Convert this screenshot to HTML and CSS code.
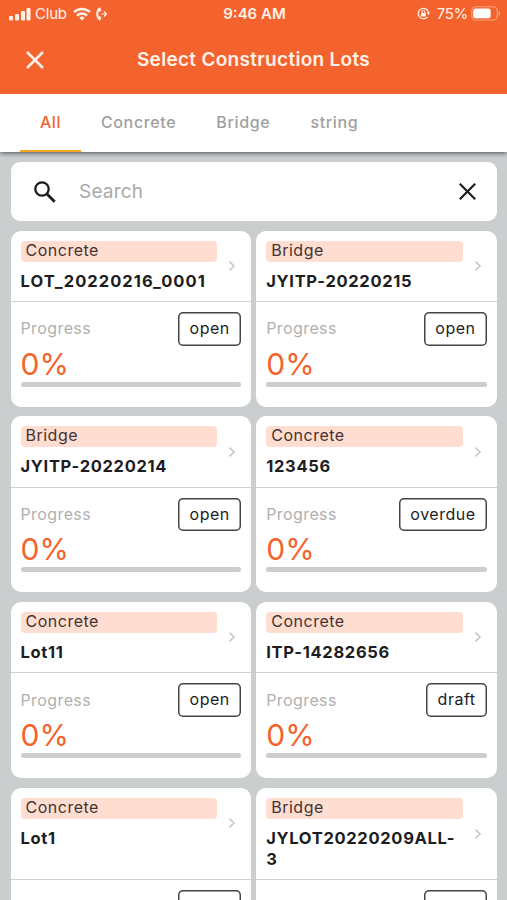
FILE: index.html
```
<!DOCTYPE html>
<html lang="en">
<head>
<meta charset="utf-8">
<title>Select Construction Lots</title>
<link rel="stylesheet" href="styles.css">
</head>
<body>
<header class="top">
  <div class="status">
    <div class="status-left">
      <svg class="signal" width="22" height="14" viewBox="0 0 22 14" fill="currentColor"><rect x="0" y="9" width="4" height="4.500" rx="1"/><rect x="6" y="7" width="4" height="6.500" rx="1"/><rect x="12" y="4" width="4" height="9.500" rx="1"/><rect x="17.500" y="1" width="4" height="12.500" rx="1"/></svg>
      <span class="carrier">Club</span>
      <svg class="wifi" width="18" height="14" viewBox="0 0 18 14" fill="none" stroke="currentColor" stroke-width="2.500"><path d="M1 5.200a11.300 11.300 0 0 1 16 0"/><path d="M4 8.600a7 7 0 0 1 10 0"/><path d="M6.300 10.800a3.800 3.800 0 0 1 5.400 0L9 13.600z" fill="currentColor" stroke="none"/></svg>
      <svg class="call" width="12" height="14" viewBox="0 0 12 14" fill="none" stroke="currentColor"><path d="M4.300 1.200C.2 3.300.2 10.700 4.300 12.800" stroke-width="2"/><path d="M3.200 2.300l1.300 1.900M3.200 11.700l1.300-1.900" stroke-width="2.600"/><path d="M5.300 7h5M8 4.500L10.500 7 8 9.500" stroke-width="1.200"/></svg>
    </div>
    <span class="clock">9:46 AM</span>
    <div class="status-right">
      <svg class="lock" width="13" height="13" viewBox="0 0 13 13" fill="none" stroke="currentColor" stroke-width="1.200"><path d="M10.500 9.800A5.200 5.200 0 1 1 11.600 6"/><path d="M9.600 5.500h3.600l-1.800 2.600z" fill="currentColor" stroke="none"/><rect x="4" y="5.800" width="4.800" height="3.600" rx=".6" fill="currentColor" stroke="none"/><path d="M5 6V4.800a1.400 1.400 0 0 1 2.800 0V6" stroke-width="1"/></svg>
      <span class="percent">75%</span>
      <svg class="battery" width="30" height="15" viewBox="0 0 30 15"><rect x=".8" y=".8" width="25.400" height="13.200" rx="4" fill="none" stroke="currentColor" stroke-opacity=".45" stroke-width="1.100"/><rect x="2.200" y="2.600" width="17.500" height="9.600" rx="2.300" fill="#fff"/><path d="M27.600 5.300c2 .7 2 3.700 0 4.400z" fill="currentColor" fill-opacity=".5"/></svg>
    </div>
  </div>
  <div class="titlebar">
    <svg class="close" width="18" height="18" viewBox="0 0 18 18" fill="none" stroke="currentColor" stroke-width="2.500"><path d="M1 1l16 16M17 1L1 17"/></svg>
    <h1>Select Construction Lots</h1>
  </div>
</header>
<nav class="tabs">
  <span class="tab active">All</span>
  <span class="tab">Concrete</span>
  <span class="tab">Bridge</span>
  <span class="tab">string</span>
</nav>
<main>
  <div class="search">
    <svg width="22" height="22" viewBox="0 0 22 22" fill="none" stroke="currentColor" stroke-width="2.300"><circle cx="8" cy="8" r="6.700"/><path d="M12.700 12.700l8 8" stroke-width="2.800"/></svg>
    <span class="placeholder">Search</span>
    <svg width="17" height="17" viewBox="0 0 17 17" fill="none" stroke="currentColor" stroke-width="2.200"><path d="M.8.8l15.400 15.400M16.200.8L.8 16.200"/></svg>
  </div>
  <div class="grid" id="grid"></div>
</main>
<script src="lots.js"></script>
</body>
</html>
```
FILE: styles.css
```
* { box-sizing: border-box; }
body {
  margin: 0;
  height: 900px;
  overflow: hidden;
  background: #cbcecf;
  color: #1d1d1f;
  font-family: Inter, "Liberation Sans", sans-serif;
  font-size: 16px;
}
svg { display: block; flex: none; }
.top {
  position: relative;
  z-index: 1;
  height: 94px;
  background: #f4632d;
  color: #fff1e8;
}
.status {
  display: grid;
  grid-template-columns: 1fr auto 1fr;
  align-items: center;
  height: 27px;
  padding: 0 7px 0 9px;
}
.status-left, .status-right { display: flex; align-items: center; }
.status-right { justify-content: flex-end; margin-right: -1px; }
.carrier { margin-left: 4px; font-size: 15px; letter-spacing: -.2px; }
.wifi { margin-left: 6px; }
.call { margin-left: 5px; }
.clock { font-size: 15px; font-weight: 600; letter-spacing: 0; }
.percent { margin: 0 3px 0 7px; font-size: 15px; letter-spacing: -.3px; }
.titlebar {
  display: grid;
  grid-template-columns: 44px 1fr 44px;
  align-items: center;
  height: 65px;
}
.close { justify-self: end; }
h1 {
  margin: 0;
  text-align: center;
  font-size: 19px;
  font-weight: 600;
  letter-spacing: .3px;
}
.tabs {
  display: flex;
  position: relative;
  height: 58px;
  padding-left: 20px;
  background: #fff;
  box-shadow: 0 1px 5px rgba(0, 0, 0, .65);
}
.tab {
  padding: 0 20px;
  color: #a0a0a0;
  font-weight: 500;
  letter-spacing: .65px;
  line-height: 56px;
}
.active { color: #f4632d; border-bottom: 2px solid #f5a623; letter-spacing: .5px; }
main { padding: 10px 10px 0 10.5px; }
.search {
  display: flex;
  align-items: center;
  height: 59px;
  padding: 0 21px 0 23px;
  border-radius: 9px;
  background: #fff;
}
.placeholder { flex: 1; margin-left: 23.5px; color: #aaa; font-size: 19px; letter-spacing: .2px; }
.grid {
  display: grid;
  grid-template-columns: 1fr 1fr;
  gap: 9.7px 5px;
  margin-top: 9.5px;
}
.card {
  display: flex;
  flex-direction: column;
  border-radius: 10px;
  background: #fff;
}
.card-head {
  flex: 1;
  padding: 10px 15px 9.5px 10px;
  border-bottom: 1.5px solid #d0d2d2;
}
.head-row { display: flex; align-items: center; }
.info { flex: 1; }
.tag {
  height: 21px;
  padding-left: 5px;
  border-radius: 4px;
  background: #ffddd0;
  color: #443431;
  line-height: 19px;
  letter-spacing: .5px;
}
.name {
  margin-top: 9px;
  width: 196px;
  font-size: 16.5px;
  font-weight: 700;
  line-height: 21px;
  letter-spacing: .68px;
}
.name.spaced { letter-spacing: 1.05px; }
.chevron { margin-left: 11px; color: #c8c8c8; }
.card-body { height: 104.5px; padding: 10px 10px 0; }
.row { display: flex; justify-content: space-between; align-items: center; height: 33.5px; }
.label { color: #b0b0b0; letter-spacing: .4px; line-height: 32px; height: 33px; }
.state {
  height: 33.5px;
  padding: 0 11.5px;
  border-radius: 5px;
  box-shadow: inset 0 0 0 1.5px #444;
  line-height: 33px;
  letter-spacing: .5px;
}
.value { height: 27px; margin-top: 1px; color: #f4632d; font-size: 30px; line-height: 34px; font-weight: 400; }
.bar { height: 5px; margin-top: 8px; border-radius: 3px; background: #cbcecd; }
```
FILE: lots.js
```
const lots = [
  ["Concrete", "LOT_20220216_0001", "open"],
  ["Bridge", "JYITP-20220215", "open"],
  ["Bridge", "JYITP-20220214", "open"],
  ["Concrete", "123456", "overdue"],
  ["Concrete", "Lot11", "open"],
  ["Concrete", "ITP-14282656", "draft"],
  ["Concrete", "Lot1", "open"],
  ["Bridge", "JYLOT20220209ALL-3", "open"]
];
document.getElementById("grid").innerHTML = lots.map(([type, name, state]) => `
  <article class="card">
    <div class="card-head">
      <div class="head-row">
        <div class="info"><div class="tag">${type}</div><div class="name${name.includes("_") ? " spaced" : ""}">${name.replace("ALL-", "ALL-<wbr>")}</div></div>
        <svg class="chevron" width="8" height="10" viewBox="0 0 8 10" fill="none" stroke="currentColor" stroke-width="1.600"><path d="M1.500.7L6 5 1.500 9.300"/></svg>
      </div>
    </div>
    <div class="card-body">
      <div class="row"><span class="label">Progress</span><span class="state">${state}</span></div>
      <div class="value">0%</div>
      <div class="bar"></div>
    </div>
  </article>`).join("");
```
